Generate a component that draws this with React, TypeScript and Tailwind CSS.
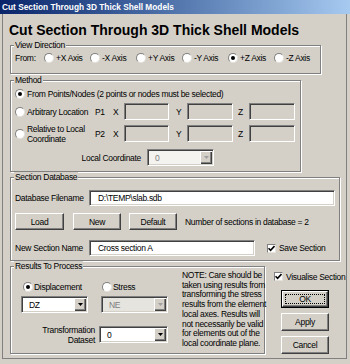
function Radio({ on = false }: { on?: boolean }) {
  return (
    <span className="w-[10px] h-[10px] shrink-0 rounded-full bg-white border border-t-[#808080] border-l-[#808080] border-r-[#e4e2dc] border-b-[#e4e2dc] flex items-center justify-center">
      {on && <span className="w-[4px] h-[4px] rounded-full bg-black" />}
    </span>
  );
}

function Check() {
  return (
    <span className="w-[9px] h-[9px] shrink-0 bg-white border border-t-[#808080] border-l-[#808080] border-r-[#e4e2dc] border-b-[#e4e2dc] flex items-center justify-center">
      <svg width="7" height="7" viewBox="0 0 7 7">
        <path d="M0.5 3.2 L2.6 5.4 L6.5 1" stroke="#000" strokeWidth="1.6" fill="none" />
      </svg>
    </span>
  );
}

function Btn({ label, className = "" }: { label: string; className?: string }) {
  return (
    <div
      className={`flex items-center justify-center bg-[#d4d0c8] border border-t-white border-l-white border-r-[#404040] border-b-[#404040] shadow-[inset_-1px_-1px_0_#808080] ${className}`}
    >
      {label}
    </div>
  );
}

function Field({ value = "", className = "", disabled = false }: { value?: string; className?: string; disabled?: boolean }) {
  return (
    <div
      className={`flex items-center pl-[8px] whitespace-nowrap border border-t-[#808080] border-l-[#808080] border-r-white border-b-white shadow-[inset_1px_1px_0_#404040,inset_-1px_-1px_0_#d4d0c8] ${
        disabled ? "bg-[#d4d0c8]" : "bg-white"
      } ${className}`}
    >
      {value}
    </div>
  );
}

function Combo({ value, className = "", disabled = false, bg = "bg-white" }: { value: string; className?: string; disabled?: boolean; bg?: string }) {
  return (
    <div
      className={`flex items-stretch p-[1px] border border-t-[#808080] border-l-[#808080] border-r-white border-b-white shadow-[inset_1px_1px_0_#404040,inset_-1px_-1px_0_#d4d0c8] ${bg} ${className}`}
    >
      <span className={`flex-1 flex items-center pl-[6px] ${disabled ? "text-[#808080]" : ""}`}>{value}</span>
      <span className="w-[12px] flex items-center justify-center bg-[#d4d0c8] shadow-[inset_1px_1px_0_#fff,inset_-1px_-1px_0_#404040,inset_-2px_-2px_0_#808080]">
        <svg width="5" height="3" viewBox="0 0 5 3">
          <path d="M0 0h5L2.5 3z" fill={disabled ? "#a0a0a0" : "#000"} />
        </svg>
      </span>
    </div>
  );
}

function Group({ title, className = "", children }: { title: string; className?: string; children: React.ReactNode }) {
  return (
    <fieldset className={`border border-[#808080] shadow-[inset_1px_1px_0_#fff,1px_1px_0_#fff] ${className}`}>
      <legend className="ml-[3px] px-[1px] leading-[10px] bg-[#d4d0c8]">{title}</legend>
      {children}
    </fieldset>
  );
}

const axes = ["+X Axis", "-X Axis", "+Y Axis", "-Y Axis", "+Z Axis", "-Z Axis"];

export default function App() {
  return (
    <div className="w-[350px] h-[364px] bg-[#d4d0c8] text-black text-[8.5px] tracking-[-0.3px] leading-[10px] font-['Liberation_Sans',Arial,sans-serif] flex flex-col">
      <div className="h-[14px] shrink-0 bg-linear-to-r from-[#0a246a] to-[#a6caf0] pl-[2px] text-white font-bold text-[8.3px] tracking-normal leading-[14px] whitespace-nowrap">
        Cut Section Through 3D Thick Shell Models
      </div>

      <div className="flex-1 ml-[2px] mr-[3px] mb-[5px] border-l border-r border-b border-[#808080] flex flex-col">
        <h1 className="ml-[6px] mt-[8px] text-[14px] leading-[16px] font-bold tracking-normal whitespace-nowrap">
          Cut Section Through 3D Thick Shell Models
        </h1>

        <Group title="View Direction" className="ml-[7px] mt-[2px] w-[309px]">
          <div className="flex items-center h-[16px] mb-[7px] pl-[4px]">
            <span className="w-[29px]">From:</span>
            {axes.map((a) => (
              <span key={a} className="w-[46px] flex items-center gap-[2px] whitespace-nowrap">
                <Radio on={a === "+Z Axis"} />
                {a}
              </span>
            ))}
          </div>
        </Group>

        <Group title="Method" className="ml-[7px] mt-[1px] w-[291px]">
          <div className="pl-[4px] mb-[5px] flex flex-col">
            <div className="h-[18px] flex items-center gap-[2px] whitespace-nowrap">
              <Radio on />
              From Points/Nodes (2 points or nodes must be selected)
            </div>
            <div className="h-[17px] flex items-center">
              <span className="w-[80px] flex items-center gap-[2px] whitespace-nowrap">
                <Radio />
                Arbitrary Location
              </span>
              <span className="w-[18px]">P1</span>
              <span className="w-[11px]">X</span>
              <Field disabled className="w-[45px] h-[17px]" />
              <span className="ml-[7px] w-[11px]">Y</span>
              <Field disabled className="w-[46px] h-[17px]" />
              <span className="ml-[5px] w-[11px]">Z</span>
              <Field disabled className="w-[46px] h-[17px]" />
            </div>
            <div className="mt-[5px] h-[17px] flex items-center">
              <span className="w-[80px] flex items-center gap-[2px]">
                <Radio />
                <span>
                  Relative to Local
                  <br />
                  Coordinate
                </span>
              </span>
              <span className="w-[18px]">P2</span>
              <span className="w-[11px]">X</span>
              <Field disabled className="w-[45px] h-[17px]" />
              <span className="ml-[7px] w-[11px]">Y</span>
              <Field disabled className="w-[46px] h-[17px]" />
              <span className="ml-[5px] w-[11px]">Z</span>
              <Field disabled className="w-[46px] h-[17px]" />
            </div>
            <div className="mt-[7px] h-[17px] flex items-center">
              <span className="w-[126px] text-right">Local Coordinate</span>
              <Combo value="0" disabled bg="bg-[#f4f3f0]" className="ml-[6px] w-[67px] h-[17px]" />
            </div>
          </div>
        </Group>

        <Group title="Section Database" className="ml-[7px] w-[330px]">
          <div className="pl-[4px] mt-[8px] mb-[4px] flex flex-col">
            <div className="h-[16px] flex items-center">
              <span className="w-[68px] text-right whitespace-nowrap">Database Filename</span>
              <Field value="D:\TEMP\slab.sdb" className="ml-[6px] w-[246px] h-[16px]" />
            </div>
            <div className="mt-[7px] h-[17px] flex items-center">
              <Btn label="Load" className="w-[49px] h-[17px]" />
              <Btn label="New" className="ml-[9px] w-[48px] h-[17px]" />
              <Btn label="Default" className="ml-[8px] w-[48px] h-[17px]" />
              <span className="ml-[8px] whitespace-nowrap">Number of sections in database = 2</span>
            </div>
            <div className="mt-[10px] h-[16px] flex items-center">
              <span className="w-[68px] text-right whitespace-nowrap">New Section Name</span>
              <Field value="Cross section A" className="ml-[6px] w-[166px] h-[16px]" />
              <span className="ml-[12px]">
                <Check />
              </span>
              <span className="ml-[3px] whitespace-nowrap">Save Section</span>
            </div>
          </div>
        </Group>

        <div className="flex">
          <Group title="Results To Process" className="ml-[7px] w-[255px]">
            <div className="flex">
              <div className="w-[171px] flex flex-col mb-[8px]">
                <div className="mt-[10px] h-[12px] pl-[12px] flex items-center">
                  <span className="w-[79px] flex items-center gap-[1px]">
                    <Radio on />
                    Displacement
                  </span>
                  <span className="flex items-center gap-[1px]">
                    <Radio />
                    Stress
                  </span>
                </div>
                <div className="mt-[3px] h-[17px] pl-[10px] flex">
                  <Combo value="DZ" className="w-[67px]" />
                  <Combo value="NE" disabled bg="bg-[#e6e4de]" className="ml-[13px] w-[67px]" />
                </div>
                <div className="mt-[13px] h-[17px] flex items-center">
                  <span className="w-[84px] text-right">
                    Transformation
                    <br />
                    Dataset
                  </span>
                  <Combo value="0" className="ml-[4px] w-[69px] h-[17px]" />
                </div>
              </div>
              <div className="w-[82px] leading-[9.7px] whitespace-nowrap">
                NOTE: Care should be
                <br />
                taken using results from
                <br />
                transforming the stress
                <br />
                results from the element
                <br />
                local axes. Results will
                <br />
                not necessarily be valid
                <br />
                for elements out of the
                <br />
                local coordinate plane.
              </div>
            </div>
          </Group>

          <div className="ml-[9px] flex flex-col">
            <div className="mt-[10px] h-[11px] flex items-center gap-[3px] whitespace-nowrap">
              <Check />
              Visualise Section
            </div>
            <div className="ml-[7px] mt-[8px] w-[48px] h-[18px] border border-black">
              <div className="h-full p-[2px] border border-t-white border-l-white border-r-[#404040] border-b-[#404040] shadow-[inset_-1px_-1px_0_#808080] flex">
                <div className="flex-1 border border-dotted border-black flex items-center justify-center">OK</div>
              </div>
            </div>
            <Btn label="Apply" className="ml-[7px] mt-[5px] w-[48px] h-[18px]" />
            <Btn label="Cancel" className="ml-[7px] mt-[5px] w-[48px] h-[18px]" />
          </div>
        </div>
      </div>
    </div>
  );
}
